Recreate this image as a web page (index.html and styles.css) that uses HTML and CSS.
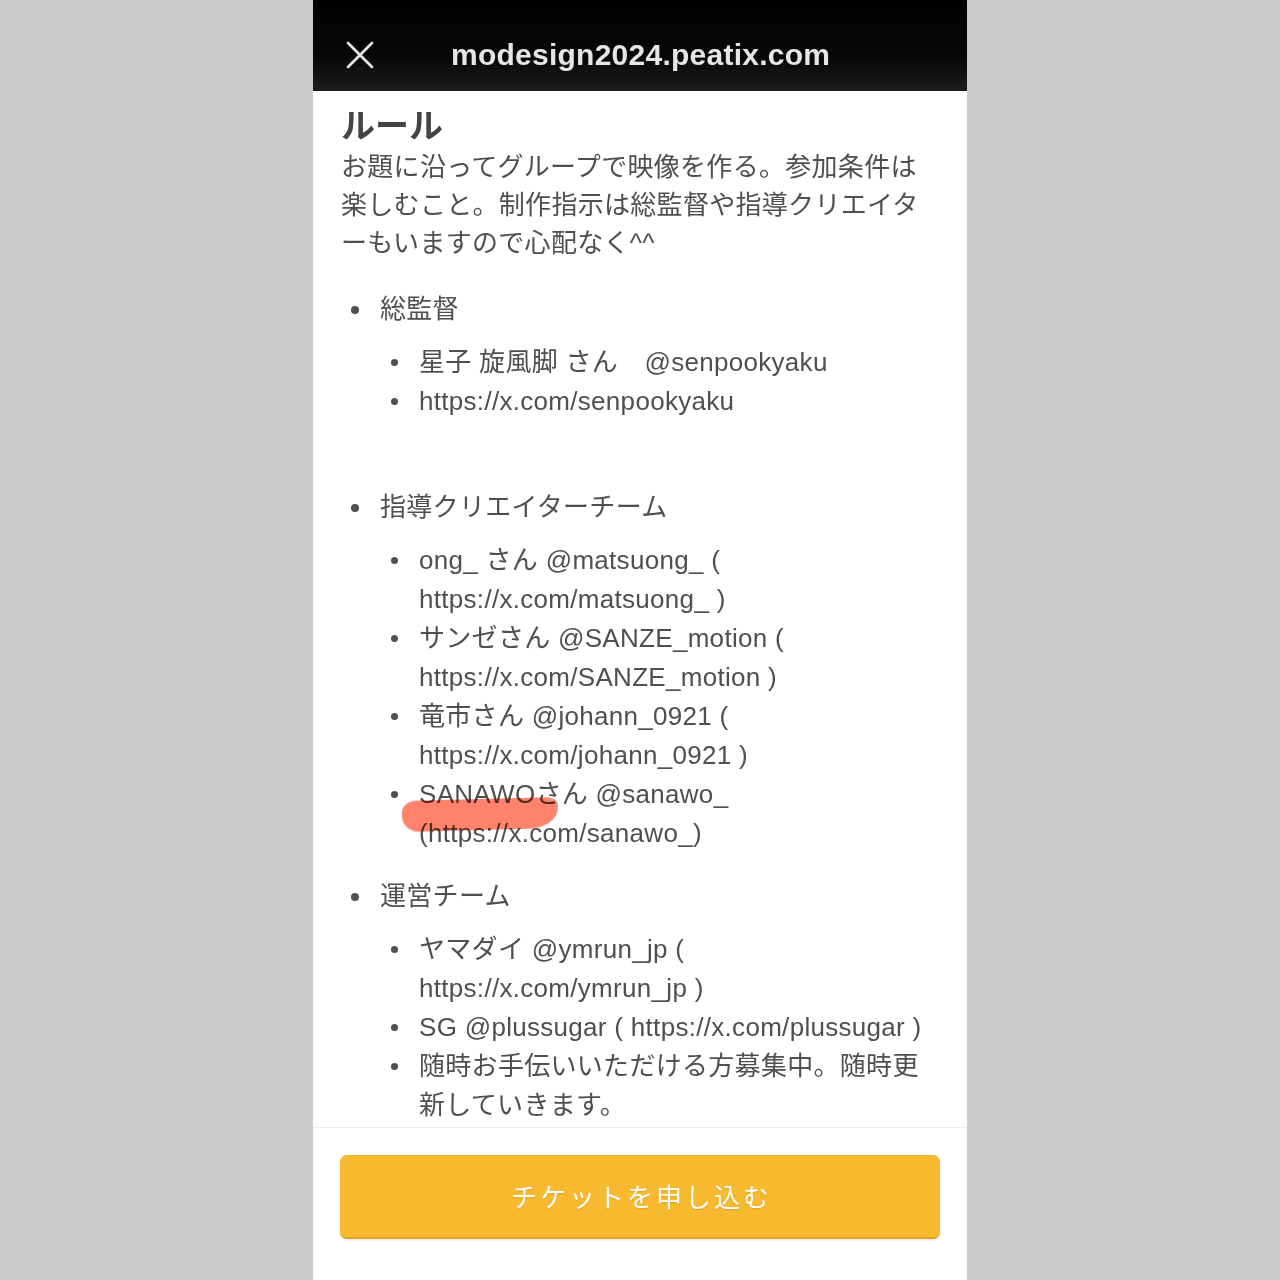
FILE: index.html
```html
<!DOCTYPE html>
<html lang="ja">
<head>
<meta charset="utf-8">
<title>modesign2024.peatix.com</title>
<link rel="stylesheet" href="styles.css">
</head>
<body>
<div class="phone">
  <header class="topbar">
    <svg class="close" width="28" height="28" viewBox="0 0 28 28" aria-hidden="true">
      <path d="M2 2 L26 26 M26 2 L2 26" stroke="#e6e6e6" stroke-width="2.8" stroke-linecap="round" fill="none"/>
    </svg>
    <div class="title">modesign2024.peatix.com</div>
  </header>
  <main class="content">
    <h2 class="heading">ルール</h2>
    <p class="lead">お題に沿ってグループで映像を作る。参加条件は楽しむこと。制作指示は総監督や指導クリエイターもいますので心配なく^^</p>
    <ul class="outer">
      <li>総監督
        <ul class="inner">
          <li>星子 旋風脚 さん　@senpookyaku</li>
          <li>https://x.com/senpookyaku</li>
        </ul>
        <div class="spacer"></div>
      </li>
      <li>指導クリエイターチーム
        <ul class="inner">
          <li>ong_ さん @matsuong_ ( https://x.com/matsuong_ )</li>
          <li>サンゼさん @SANZE_motion ( https://x.com/SANZE_motion )</li>
          <li>竜市さん @johann_0921 ( https://x.com/johann_0921 )</li>
          <li class="marked"><span class="hl"></span>SANAWOさん @sanawo_ (https://x.com/sanawo_)</li>
        </ul>
      </li>
      <li>運営チーム
        <ul class="inner">
          <li>ヤマダイ @ymrun_jp ( https://x.com/ymrun_jp )</li>
          <li>SG @plussugar ( https://x.com/plussugar )</li>
          <li>随時お手伝いいただける方募集中。随時更新していきます。</li>
        </ul>
      </li>
    </ul>
  </main>
  <footer class="footer">
    <button class="cta" type="button">チケットを申し込む</button>
  </footer>
</div>
</body>
</html>
```
FILE: styles.css
```css
html, body {
  margin: 0;
  padding: 0;
}
body {
  background: #cbcbcb;
  font-family: "Liberation Sans", "Noto Sans CJK JP", sans-serif;
}
.phone {
  width: 654px;
  height: 1280px;
  margin: 0 auto;
  background: #ffffff;
  display: flex;
  flex-direction: column;
  overflow: hidden;
}
.topbar {
  height: 91px;
  flex: none;
  background: linear-gradient(#000000 0%, #070707 60%, #1c1c1c 100%);
  display: flex;
  align-items: center;
  padding: 19px 0 0 33px;
  box-sizing: border-box;
}
.close {
  flex: none;
}
.title {
  margin-left: 77px;
  color: #e6e6e6;
  font-family: "Liberation Sans", sans-serif;
  font-weight: 700;
  font-size: 30px;
  letter-spacing: 0.25px;
}
.content {
  flex: 1;
  min-height: 0;
  overflow: hidden;
  padding: 13px 34px 0 28px;
  color: #4f4f4f;
  font-size: 26px;
  letter-spacing: 0.3px;
}
.heading {
  margin: 0;
  font-size: 34px;
  line-height: 40px;
  font-weight: 700;
  color: #444444;
  letter-spacing: 0;
  font-family: "Noto Sans CJK JP", sans-serif;
}
.lead {
  margin: 4px 0 0;
  line-height: 38px;
}
.outer {
  list-style: none;
  margin: 28px 0 0;
  padding: 0 0 0 39px;
}
.outer > li {
  position: relative;
  line-height: 39px;
}
.outer li::before {
  content: "";
  position: absolute;
  width: 8px;
  height: 8px;
  border-radius: 50%;
  background: #505050;
  top: 16px;
}
.outer > li::before {
  left: -29px;
}
.inner {
  list-style: none;
  margin: 14px 0 24px;
  padding: 0 0 0 39px;
}
.inner > li {
  position: relative;
  line-height: 39px;
}
.inner > li::before {
  left: -28px;
  width: 7px;
  height: 7px;
}
.spacer {
  height: 43px;
  margin-top: -24px;
  margin-bottom: 24px;
}
.marked .hl {
  position: absolute;
  left: -17px;
  top: 24px;
  width: 156px;
  height: 31px;
  background: rgba(255, 104, 76, 0.82);
  border-radius: 14px 12px 30px 16px / 12px 8px 20px 16px;
  transform: rotate(-1.5deg);
  mix-blend-mode: multiply;
  filter: blur(0.6px);
}
.footer {
  flex: none;
  height: 153px;
  border-top: 1px solid #ececec;
  box-sizing: border-box;
  padding: 27px 27px 0;
}
.cta {
  display: block;
  width: 100%;
  height: 84px;
  border: none;
  border-bottom: 2px solid #e3a520;
  border-radius: 7px;
  background: #f6b92f;
  color: #ffffff;
  font-family: "Noto Sans CJK JP", sans-serif;
  font-size: 26px;
  letter-spacing: 3px;
  text-shadow: 0 1px 1px rgba(150, 100, 0, 0.25);
  box-shadow: 0 1px 2px rgba(0, 0, 0, 0.12);
  padding: 0 0 2px 3px;
}
```
